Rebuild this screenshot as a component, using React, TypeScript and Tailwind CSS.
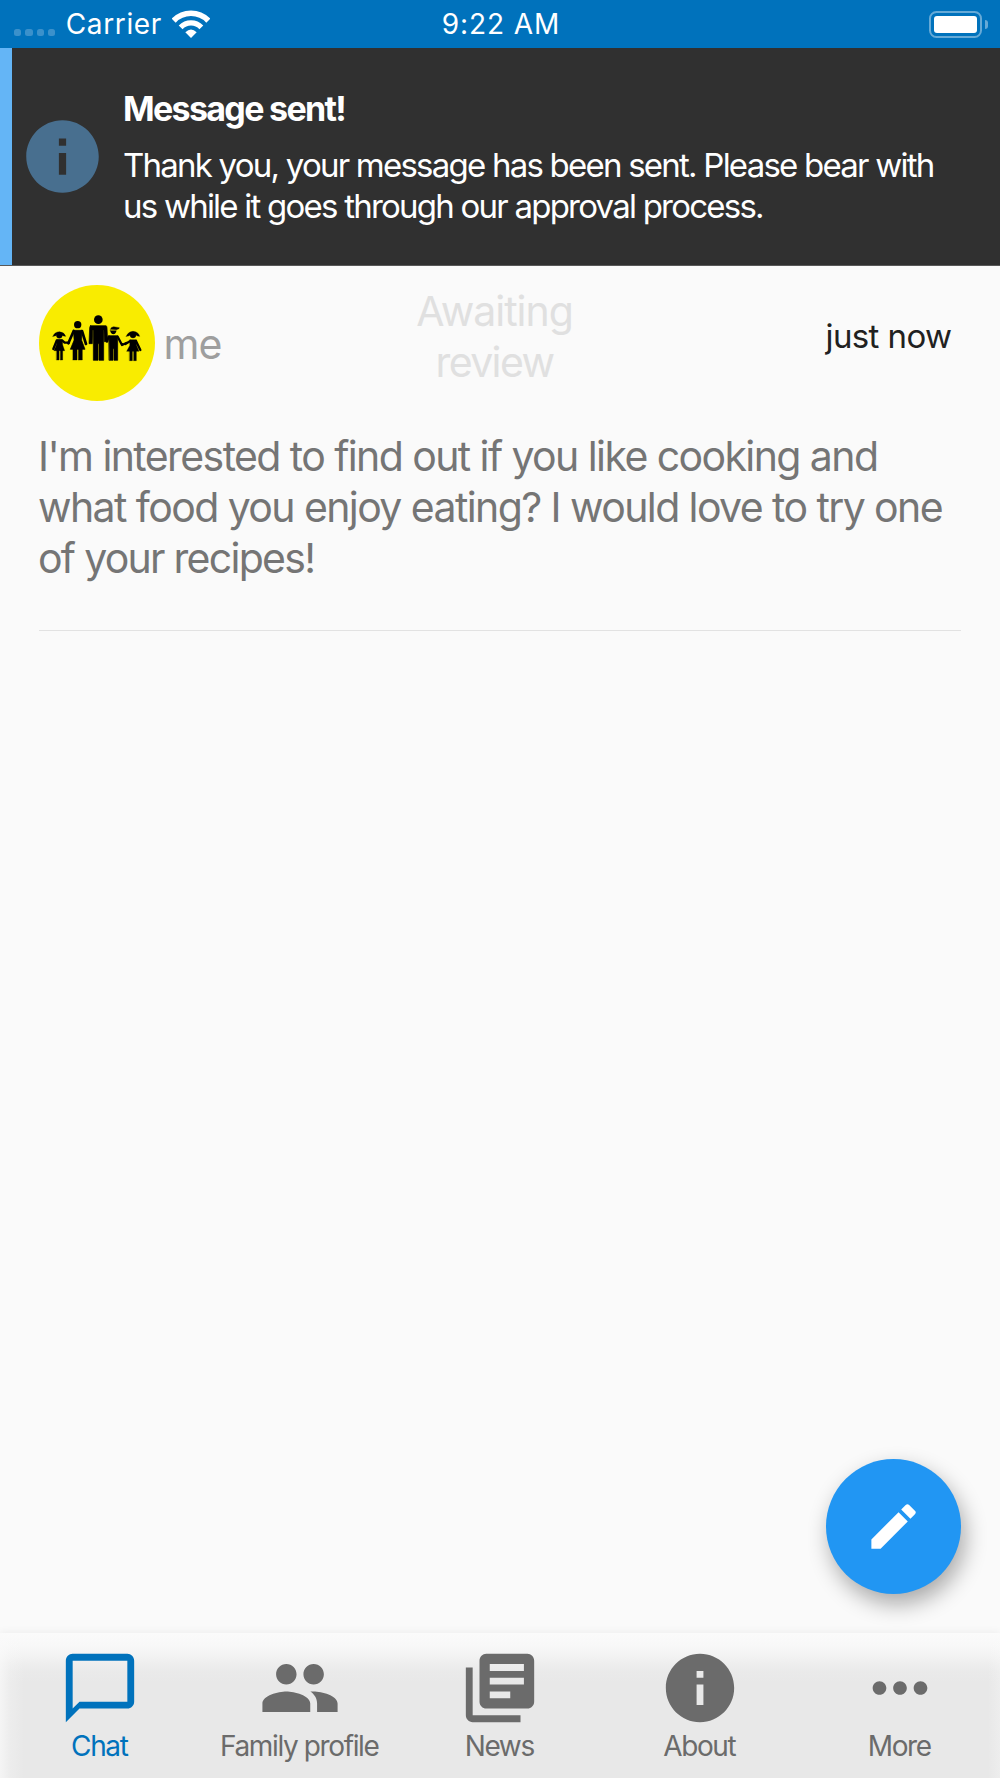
import type { ReactNode } from "react";
import { MdEdit, MdInfo, MdLibraryBooks, MdMoreHoriz, MdPeople } from "react-icons/md";

function WifiIcon() {
  return (
    <svg className="ml-[10px] h-[28px] w-[38px]" viewBox="516 28 114 84" fill="none">
      <path d="M521 60A72 72 0 0 1 625 60" stroke="#fff" strokeWidth="17" />
      <path d="M542 80A43 43 0 0 1 604 80" stroke="#fff" strokeWidth="16" />
      <path d="M556 95Q573 78 590 95L573 112Z" fill="#fff" />
    </svg>
  );
}

function StatusBar() {
  return (
    <header className="grid h-12 grid-cols-3 items-center bg-[#0072bc] text-[28px] leading-[48px] text-white">
      <div className="flex items-center pl-[14px]">
        <div className="mt-[17px] flex gap-[4px]">
          {[0, 1, 2, 3].map((i) => (
            <span key={i} className="size-[7.3px] rounded-[2.5px] bg-[#3b91cb]" />
          ))}
        </div>
        <span className="ml-[10.5px] tracking-[0.65px]">Carrier</span>
        <WifiIcon />
      </div>
      <div className="pl-[2px] text-center tracking-[0.95px]">9:22 AM</div>
      <div className="flex items-center justify-end pr-[12px]">
        <div className="h-[27px] w-[53px] rounded-[7.5px] border-2 border-[#66aad7] p-[3px]">
          <div className="h-full w-full rounded-[3px] bg-white" />
        </div>
        <div className="ml-[3px] h-[9px] w-[3px] rounded-r-full bg-[#66aad7]" />
      </div>
    </header>
  );
}

function Toast() {
  return (
    <section className="flex h-[218px] items-center border-b border-[#585858] bg-[#303030] text-white">
      <div className="h-full w-3 bg-[#64b5f6]" />
      <MdInfo className="ml-[7px] size-[87px] text-[#486f8f]" />
      <div className="flex h-full flex-col pt-[41px] pl-[17px] whitespace-nowrap">
        <h1 className="text-[34px] leading-[40px] font-bold tracking-[-1.68px]">Message sent!</h1>
        <p className="mt-[15.5px] text-[33px] leading-[41.3px] tracking-[-1.77px]">
          Thank you, your message has been sent. Please bear with
          <br />
          us while it goes through our approval process.
        </p>
      </div>
    </section>
  );
}

function FamilyAvatar() {
  return (
    <svg className="size-[116px] shrink-0" viewBox="27 14 348 348">
      <circle cx="201" cy="188" r="174" fill="#f9ec00" />
      <g fill="#000" stroke="#000" strokeLinecap="round" strokeLinejoin="round">
        <g strokeWidth="1">
          <circle cx="88" cy="165" r="9" />
          <path d="M69 168Q73 155 88 154Q103 155 107 168Q98 169 94 161H82Q78 169 69 168Z" />
          <path d="M80 177H97L98 194L104 211H72L79 194Z" />
          <path d="M80 209h7v30h-7zM91 209h7v30h-7z" />
        </g>
        <path d="M80 181L70 206M97 181L104 187L117 187" fill="none" strokeWidth="7" />
        <circle cx="143" cy="133" r="11" strokeWidth="0" />
        <path d="M131 150H156L155 180L165 207H121L132 180Z" strokeWidth="2" />
        <path d="M131 152L115 189M156 152L168 191" fill="none" strokeWidth="8" />
        <path d="M129 205h12v34h-12zM145 205h12v34h-12z" strokeWidth="1" />
        <circle cx="205" cy="118" r="13" strokeWidth="0" />
        <path d="M182 136H228Q231 137 231 142L233 184H223L222 150H221V240H207V190H204V240H190V150H188L187 190H177L179 142Q179 137 182 136Z" strokeWidth="2" />
        <path d="M241 151H259Q257 161 250 161Q243 161 241 151ZM241 147Q243 139 251 139L268 142L267 145L259 148Z" strokeWidth="1" />
        <path d="M237 166H263V240H252V205H249V240H238Z" strokeWidth="2" />
        <path d="M236 169L231 184M263 169L276 194L289 188" fill="none" strokeWidth="7" />
        <g strokeWidth="1">
          <circle cx="309" cy="164" r="9" />
          <path d="M289 168Q294 154 309 153Q325 154 329 168Q320 169 316 161H303Q298 169 289 168Z" />
          <path d="M300 178H319L320 196L327 213H290L299 196Z" />
          <path d="M299 211h8v30h-8zM311 211h8v30h-8z" />
        </g>
        <path d="M301 182L286 191M318 182L331 209" fill="none" strokeWidth="7" />
      </g>
    </svg>
  );
}

function Message() {
  return (
    <article className="mx-[39px] border-b border-[#e2e2e2]">
      <div className="flex h-[165px] whitespace-nowrap pt-[19px]">
        <div className="flex w-[361px]">
          <FamilyAvatar />
          <span className="mt-[34px] ml-[8.5px] text-[41px] leading-[51px] tracking-[-0.9px] text-[#9e9e9e]">me</span>
        </div>
        <div className="mt-[1px] w-[189px] text-center text-[41px] leading-[51px] text-[#e0e0e0]">
          <div className="tracking-[-1px]">Awaiting</div>
          <div className="tracking-[-1.6px]">review</div>
        </div>
        <time className="mt-[31px] ml-[236.5px] text-[33px] leading-[41px] tracking-[-0.6px] text-[#212121]">just now</time>
      </div>
      <p className="-ml-px h-[199px] whitespace-nowrap text-[41px] leading-[51px] tracking-[-1.59px] text-[#757575]">
        I'm interested to find out if you like cooking and
        <br />
        what food you enjoy eating? I would love to try one
        <br />
        <span className="tracking-[-1.72px]">of your recipes!</span>
      </p>
    </article>
  );
}

function ChatIcon() {
  return (
    <svg className="size-[82px]" viewBox="0 0 24 24" fill="currentColor">
      <path d="M20 2H4c-1.1 0-2 .9-2 2v18l4-4h14c1.1 0 2-.9 2-2V4c0-1.1-.9-2-2-2zm0 14H6l-2 2V4h16v12z" />
    </svg>
  );
}

function Tab({ icon, label, active = false }: { icon: ReactNode; label: string; active?: boolean }) {
  return (
    <button className={active ? "flex flex-col items-center text-[#0072bc]" : "flex flex-col items-center text-[#6b6b6b]"}>
      {icon}
      <span className="pr-[1.5px] text-[28px] leading-[34px] tracking-[-1.38px] whitespace-nowrap">{label}</span>
    </button>
  );
}

function TabBar() {
  return (
    <nav className="relative grid h-[145px] grid-cols-5 items-start bg-[#e8e8e8] bg-[linear-gradient(to_right,rgba(250,250,250,0.7),rgba(250,250,250,0.25)_10px,rgba(250,250,250,0)_24px,rgba(250,250,250,0)_988px,rgba(250,250,250,0.3)),linear-gradient(to_bottom,#fbfbfb,#f8f8f8_12px,#f2f2f2_24px,#eaeaea_38px,#e8e8e8_50px)] pt-[14.4px] shadow-[0_-1px_8px_rgba(0,0,0,0.055)]">
      <Tab icon={<ChatIcon />} label="Chat" active />
      <Tab icon={<MdPeople className="size-[82px]" />} label="Family profile" />
      <Tab icon={<MdLibraryBooks className="size-[82px]" />} label="News" />
      <Tab icon={<MdInfo className="size-[82px]" />} label="About" />
      <Tab icon={<MdMoreHoriz className="size-[82px]" />} label="More" />
    </nav>
  );
}

export default function App() {
  return (
    <div className="flex h-[1778px] w-[1000px] flex-col overflow-hidden bg-[#fafafa] font-['Inter',sans-serif]">
      <StatusBar />
      <Toast />
      <main className="flex flex-1 flex-col justify-between">
        <Message />
        <button
          aria-label="Write a message"
          className="mr-[39px] mb-[39px] flex size-[135px] items-center justify-center self-end rounded-full bg-[#2196f3] text-white shadow-[4px_10px_22px_rgba(0,0,0,0.33)]"
        >
          <MdEdit className="size-[59px]" />
        </button>
      </main>
      <TabBar />
    </div>
  );
}
